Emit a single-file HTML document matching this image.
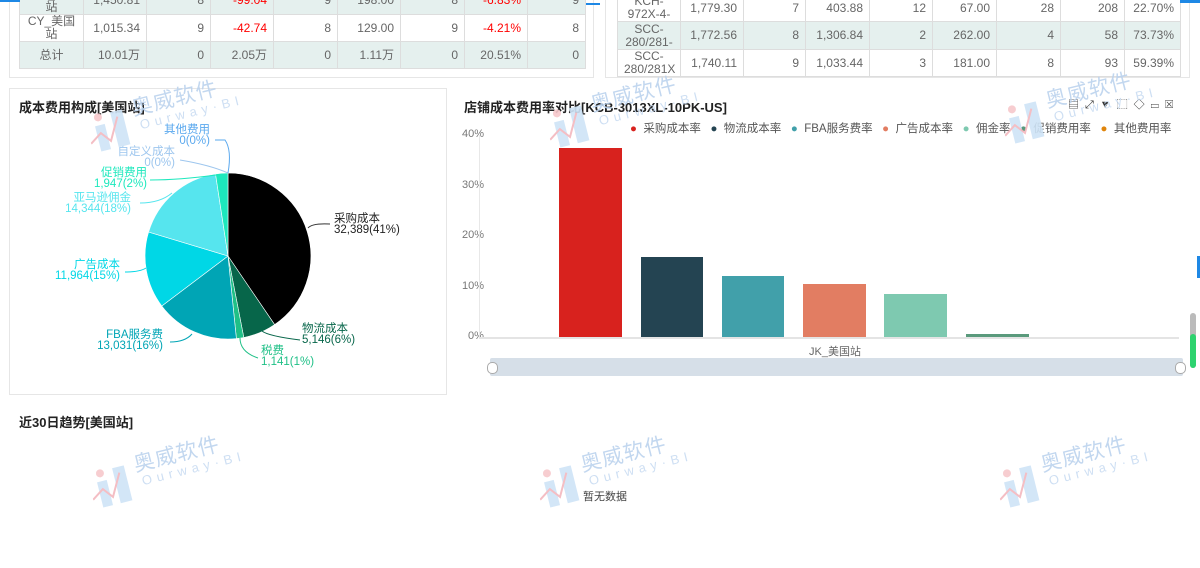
<!DOCTYPE html>
<html><head><meta charset="utf-8"><style>
*{margin:0;padding:0;box-sizing:border-box}
body{width:1200px;height:568px;background:#fff;position:relative;overflow:hidden;font-family:"Liberation Sans","Noto Sans CJK SC",sans-serif;color:#555}
.abs{position:absolute}
table{border-collapse:collapse;position:absolute;font-size:12px;color:#666;table-layout:fixed}
td{border:1px solid #ddd;text-align:right;padding:0 6px;line-height:13px;overflow:hidden;white-space:nowrap}
td.c{text-align:center;white-space:normal}
.red{color:#f00}
.g{background:#e5f0ee}
.box{position:absolute;border:1px solid #e6e6e6}
.title{position:absolute;font-size:13px;font-weight:bold;color:#222}
.wm{position:absolute;width:150px;height:60px;transform:rotate(-14deg);opacity:.9}
.wm .t{position:absolute;left:48px;top:2px;font-size:21px;color:#bcd3ee;letter-spacing:1px}
.wm .s{position:absolute;left:52px;top:28px;font-size:13px;color:#c9dcf2;letter-spacing:5px}
</style></head><body>

<!-- top left table -->
<div class="box" style="left:9px;top:-2px;width:585px;height:80px"></div>
<table style="left:19px;top:-14px;width:566px">
<colgroup><col style="width:64px"><col style="width:63px"><col style="width:64px"><col style="width:63px"><col style="width:64px"><col style="width:63px"><col style="width:64px"><col style="width:63px"><col style="width:58px"></colgroup>
<tr class="g" style="height:28px"><td class="c">_<br>站</td><td>1,450.81</td><td>8</td><td class="red">-99.04</td><td>9</td><td>198.00</td><td>8</td><td class="red">-6.83%</td><td>9</td></tr>
<tr style="height:27px"><td class="c">CY_美国<br>站</td><td>1,015.34</td><td>9</td><td class="red">-42.74</td><td>8</td><td>129.00</td><td>9</td><td class="red">-4.21%</td><td>8</td></tr>
<tr class="g" style="height:27px"><td class="c">总计</td><td>10.01万</td><td>0</td><td>2.05万</td><td>0</td><td>1.11万</td><td>0</td><td>20.51%</td><td>0</td></tr>
</table>
<div class="abs" style="left:0;top:0;width:20px;height:2px;background:#1e88e5"></div>
<div class="abs" style="left:586px;top:3px;width:14px;height:2px;background:#1e88e5"></div>

<!-- top right table -->
<div class="box" style="left:605px;top:-2px;width:585px;height:80px"></div>
<table style="left:617px;top:-6px;width:563px">
<colgroup><col style="width:63px"><col style="width:63px"><col style="width:62px"><col style="width:64px"><col style="width:63px"><col style="width:64px"><col style="width:64px"><col style="width:64px"><col style="width:56px"></colgroup>
<tr style="height:26px"><td class="c">KCH-<br>972X-4-</td><td>1,779.30</td><td>7</td><td>403.88</td><td>12</td><td>67.00</td><td>28</td><td>208</td><td>22.70%</td></tr>
<tr class="g" style="height:28px"><td class="c">SCC-<br>280/281-</td><td>1,772.56</td><td>8</td><td>1,306.84</td><td>2</td><td>262.00</td><td>4</td><td>58</td><td>73.73%</td></tr>
<tr style="height:21px"><td class="c" style="vertical-align:top;line-height:13px">SCC-<br>280/281X</td><td>1,740.11</td><td>9</td><td>1,033.44</td><td>3</td><td>181.00</td><td>8</td><td>93</td><td>59.39%</td></tr>
</table>
<div class="abs" style="left:1180px;top:0;width:20px;height:3px;background:#1e88e5"></div>

<!-- pie box -->
<div class="box" style="left:9px;top:88px;width:438px;height:307px"></div>
<div class="title" style="left:19px;top:97px">成本费用构成[美国站]</div>
<svg class="abs" style="left:0;top:0" width="450" height="400">
<g stroke="#fff" stroke-width="0.6">
<path d="M228,256 L228,173 A83,83 0 0 1 274.6,324.6Z" fill="#000"/>
<path d="M228,256 L274.6,324.6 A83,83 0 0 1 243.8,337.5Z" fill="#07664a"/>
<path d="M228,256 L243.8,337.5 A83,83 0 0 1 236.4,338.6Z" fill="#1fc087"/>
<path d="M228,256 L236.4,338.6 A83,83 0 0 1 161.8,306Z" fill="#00a5b5"/>
<path d="M228,256 L161.8,306 A83,83 0 0 1 148.6,232Z" fill="#00d7e6"/>
<path d="M228,256 L148.6,232 A83,83 0 0 1 215.5,173.9Z" fill="#56e5ee"/>
<path d="M228,256 L215.5,173.9 A83,83 0 0 1 228,173Z" fill="#1de8bd"/>
</g>
<g fill="none" stroke-width="1">
<path d="M308,228 Q312,223 330,224" stroke="#333"/>
<path d="M262,331 Q268,336 300,340" stroke="#07664a"/>
<path d="M240,338 Q240,352 258,358" stroke="#1fc087"/>
<path d="M192,334 Q185,342 170,342" stroke="#00a5b5"/>
<path d="M146,268 Q140,272 125,272" stroke="#00d7e6"/>
<path d="M172,193 Q160,203 140,203" stroke="#56e5ee"/>
<path d="M216,175 Q180,180 150,180" stroke="#1de8bd"/>
<path d="M228,173 Q210,165 180,160" stroke="#9dc6ee"/>
<path d="M228,173 Q232,150 225,140 L215,140" stroke="#5aa8ee"/>
</g>
</svg>
<div class="abs" style="left:0;top:0;font-size:11.5px;line-height:11px">
<div class="abs" style="left:334px;top:214px;color:#222;white-space:nowrap">采购成本<br>32,389(41%)</div>
<div class="abs" style="left:302px;top:324px;color:#07664a;white-space:nowrap">物流成本<br>5,146(6%)</div>
<div class="abs" style="left:261px;top:346px;color:#1fc087;white-space:nowrap">税费<br>1,141(1%)</div>
<div class="abs" style="left:93px;top:330px;width:70px;text-align:right;color:#00a5b5;white-space:nowrap">FBA服务费<br>13,031(16%)</div>
<div class="abs" style="left:50px;top:260px;width:70px;text-align:right;color:#00d7e6;white-space:nowrap">广告成本<br>11,964(15%)</div>
<div class="abs" style="left:51px;top:193px;width:80px;text-align:right;color:#56e5ee;white-space:nowrap">亚马逊佣金<br>14,344(18%)</div>
<div class="abs" style="left:80px;top:168px;width:67px;text-align:right;color:#1de8bd;white-space:nowrap">促销费用<br>1,947(2%)</div>
<div class="abs" style="left:100px;top:147px;width:75px;text-align:right;color:#9dc6ee;white-space:nowrap">自定义成本<br>0(0%)</div>
<div class="abs" style="left:150px;top:125px;width:60px;text-align:right;color:#5aa8ee;white-space:nowrap">其他费用<br>0(0%)</div>
</div>

<!-- bar chart -->
<div class="title" style="left:464px;top:97px">店铺成本费用率对比[KCB-3013XL-10PK-US]</div>
<div class="abs" style="left:1068px;top:96px;font-size:11px;color:#333;letter-spacing:6px">▤⤢▼⬚◇▭☒</div>
<div class="abs" style="left:630px;top:120px;font-size:11.5px;color:#555;white-space:nowrap;word-spacing:0">
<span style="color:#d8221e">●</span>&nbsp;&nbsp;采购成本率&nbsp;&nbsp;&nbsp;<span style="color:#244452">●</span>&nbsp;&nbsp;物流成本率&nbsp;&nbsp;&nbsp;<span style="color:#41a0aa">●</span>&nbsp;&nbsp;FBA服务费率&nbsp;&nbsp;&nbsp;<span style="color:#e27d62">●</span>&nbsp;&nbsp;广告成本率&nbsp;&nbsp;&nbsp;<span style="color:#7ec9b0">●</span>&nbsp;&nbsp;佣金率&nbsp;&nbsp;&nbsp;<span style="color:#5a9a7c">●</span>&nbsp;&nbsp;促销费用率&nbsp;&nbsp;&nbsp;<span style="color:#e0850b">●</span>&nbsp;&nbsp;其他费用率</div>
<div class="abs" style="left:462px;top:129px;font-size:11px;color:#777;line-height:11px">
<div class="abs" style="top:0">40%</div><div class="abs" style="top:51px">30%</div><div class="abs" style="top:101px">20%</div><div class="abs" style="top:152px">10%</div><div class="abs" style="top:202px;left:6px">0%</div></div>
<div class="abs" style="left:479px;top:135px;width:1px;height:203px;background:#e8e8e8"></div>
<div class="abs" style="left:479px;top:337px;width:700px;height:2px;background:#e4e4e4"></div>
<div class="abs" style="left:559px;top:148px;width:63px;height:189px;background:#d8221e"></div>
<div class="abs" style="left:641px;top:257px;width:62px;height:80px;background:#244452"></div>
<div class="abs" style="left:722px;top:276px;width:62px;height:61px;background:#41a0aa"></div>
<div class="abs" style="left:803px;top:284px;width:63px;height:53px;background:#e27d62"></div>
<div class="abs" style="left:884px;top:294px;width:63px;height:43px;background:#7ec9b0"></div>
<div class="abs" style="left:966px;top:334px;width:63px;height:3px;background:#5a9a7c"></div>
<div class="abs" style="left:809px;top:343px;font-size:11px;color:#666">JK_美国站</div>
<div class="abs" style="left:490px;top:358px;width:693px;height:18px;background:#d6dfe8;border-radius:2px"></div>
<div class="abs" style="left:487px;top:362px;width:11px;height:12px;background:#fff;border:1px solid #aaa;border-radius:5px"></div>
<div class="abs" style="left:1175px;top:362px;width:11px;height:12px;background:#fff;border:1px solid #aaa;border-radius:5px"></div>
<div class="abs" style="left:1190px;top:313px;width:6px;height:55px;background:#bbb;border-radius:3px"></div>
<div class="abs" style="left:1190px;top:334px;width:6px;height:34px;background:#2dd36f;border-radius:3px"></div>
<div class="abs" style="left:1197px;top:256px;width:3px;height:22px;background:#1e88e5"></div>

<!-- trend -->
<div class="title" style="left:19px;top:412px">近30日趋势[美国站]</div>
<div class="abs" style="left:583px;top:488px;font-size:11px;color:#444">暂无数据</div>

<!-- watermarks -->
<div class="wm" style="left:86px;top:84px"><svg width="48" height="50" class="abs" style="left:0;top:8px"><rect x="8" y="18" width="10" height="26" fill="#cfe4f7"/><rect x="26" y="8" width="12" height="36" fill="#cfe4f7"/><circle cx="13" cy="10" r="4" fill="#f7c8cc"/><path d="M0,34 L12,26 L20,36 L32,14" stroke="#f3b7be" stroke-width="2" fill="none"/></svg><div class="t">奥威软件</div><div class="s">Ourway·BI</div></div>
<div class="wm" style="left:545px;top:80px"><svg width="48" height="50" class="abs" style="left:0;top:8px"><rect x="8" y="18" width="10" height="26" fill="#cfe4f7"/><rect x="26" y="8" width="12" height="36" fill="#cfe4f7"/><circle cx="13" cy="10" r="4" fill="#f7c8cc"/><path d="M0,34 L12,26 L20,36 L32,14" stroke="#f3b7be" stroke-width="2" fill="none"/></svg><div class="t">奥威软件</div><div class="s">Ourway·BI</div></div>
<div class="wm" style="left:1000px;top:76px"><svg width="48" height="50" class="abs" style="left:0;top:8px"><rect x="8" y="18" width="10" height="26" fill="#cfe4f7"/><rect x="26" y="8" width="12" height="36" fill="#cfe4f7"/><circle cx="13" cy="10" r="4" fill="#f7c8cc"/><path d="M0,34 L12,26 L20,36 L32,14" stroke="#f3b7be" stroke-width="2" fill="none"/></svg><div class="t">奥威软件</div><div class="s">Ourway·BI</div></div>
<div class="wm" style="left:88px;top:440px"><svg width="48" height="50" class="abs" style="left:0;top:8px"><rect x="8" y="18" width="10" height="26" fill="#cfe4f7"/><rect x="26" y="8" width="12" height="36" fill="#cfe4f7"/><circle cx="13" cy="10" r="4" fill="#f7c8cc"/><path d="M0,34 L12,26 L20,36 L32,14" stroke="#f3b7be" stroke-width="2" fill="none"/></svg><div class="t">奥威软件</div><div class="s">Ourway·BI</div></div>
<div class="wm" style="left:535px;top:440px"><svg width="48" height="50" class="abs" style="left:0;top:8px"><rect x="8" y="18" width="10" height="26" fill="#cfe4f7"/><rect x="26" y="8" width="12" height="36" fill="#cfe4f7"/><circle cx="13" cy="10" r="4" fill="#f7c8cc"/><path d="M0,34 L12,26 L20,36 L32,14" stroke="#f3b7be" stroke-width="2" fill="none"/></svg><div class="t">奥威软件</div><div class="s">Ourway·BI</div></div>
<div class="wm" style="left:995px;top:440px"><svg width="48" height="50" class="abs" style="left:0;top:8px"><rect x="8" y="18" width="10" height="26" fill="#cfe4f7"/><rect x="26" y="8" width="12" height="36" fill="#cfe4f7"/><circle cx="13" cy="10" r="4" fill="#f7c8cc"/><path d="M0,34 L12,26 L20,36 L32,14" stroke="#f3b7be" stroke-width="2" fill="none"/></svg><div class="t">奥威软件</div><div class="s">Ourway·BI</div></div>
</body></html>
